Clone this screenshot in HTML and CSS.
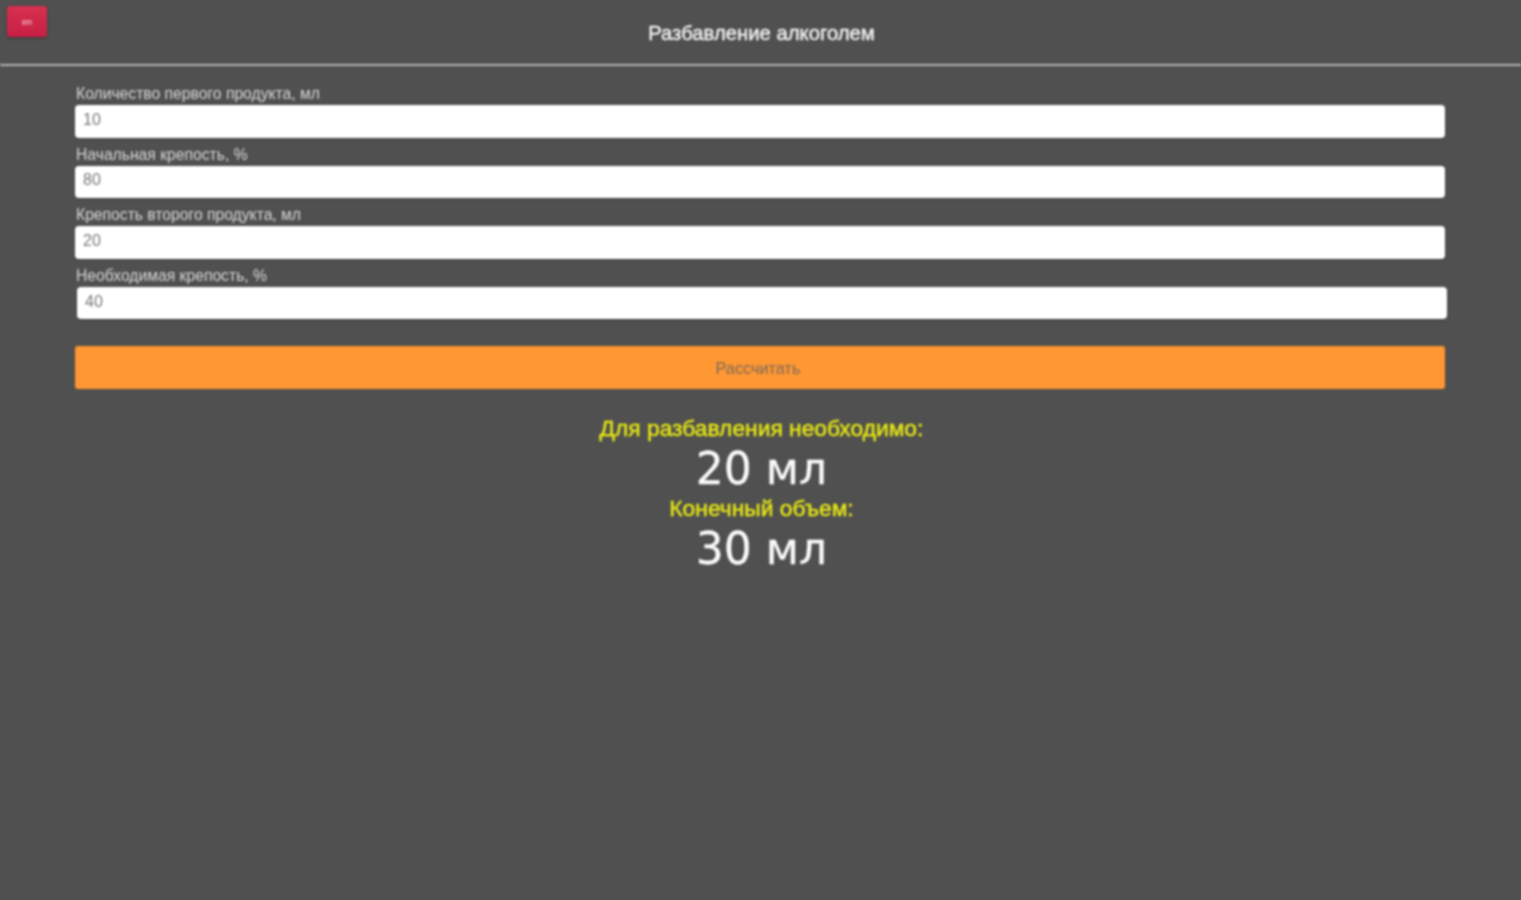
FILE: index.html
```html
<!DOCTYPE html>
<html lang="ru">
<head>
<meta charset="utf-8">
<title>Разбавление алкоголем</title>
<link rel="stylesheet" href="styles.css">
</head>
<body>
<div class="page">
  <header class="header">
    <button class="back" type="button">en</button>
    <h1 class="title">Разбавление алкоголем</h1>
  </header>
  <main class="content">
    <form class="form">
      <label class="field"><span class="label">Количество первого продукта, мл</span><input class="input" value="10"></label>
      <label class="field"><span class="label">Начальная крепость, %</span><input class="input" value="80"></label>
      <label class="field"><span class="label">Крепость второго продукта, мл</span><input class="input" value="20"></label>
      <label class="field field-shift"><span class="label">Необходимая крепость, %</span><input class="input" value="40"></label>
      <button class="submit" type="button">Рассчитать</button>
    </form>
    <section class="results">
      <p class="result-label">Для разбавления необходимо:</p>
      <p class="result-value">20 мл</p>
      <p class="result-label">Конечный объем:</p>
      <p class="result-value">30 мл</p>
    </section>
  </main>
</div>
</body>
</html>
```
FILE: styles.css
```css
* { box-sizing: border-box; }
html, body { height: 100%; }
body {
  margin: 0;
  background: #505050;
  font-family: "Liberation Sans", Arial, sans-serif;
  overflow: hidden;
}
.page { height: 900px; filter: blur(0.9px); }
.header {
  position: relative;
  height: 66px;
  padding: 2px 0 0 2px;
  border-bottom: 2px solid #b4b4b4;
  display: flex;
  align-items: center;
  justify-content: center;
}
.back {
  position: absolute;
  left: 7px;
  top: 6px;
  width: 40px;
  height: 31px;
  border: 0;
  border-radius: 3px;
  padding: 0;
  background: linear-gradient(#d8304f, #c81f45);
  box-shadow: 0 1px 3px rgba(0,0,0,.35);
  color: #f3d5dc;
  font: 9px "Liberation Sans", Arial, sans-serif;
}
.title {
  margin: 0;
  color: #f4f4f4;
  font-size: 20.3px;
  font-weight: 400;
  -webkit-text-stroke: 0.4px #f4f4f4;
}
.content { padding: 17px 76px 0 75px; }
.form { display: flex; flex-direction: column; }
.field { display: flex; flex-direction: column; height: 60.6px; }
.field-shift { margin: 0 -2px 0 2px; }
.field-shift .label { margin-left: -2px; }
.label {
  height: 22px;
  padding: 3px 0 0 1px;
  color: #d8d8d8;
  font-size: 15.7px;
  line-height: 16px;
}
.input {
  height: 32.5px;
  width: 100%;
  border: 0;
  border-radius: 4px;
  padding: 0 8px 3px;
  background: #fff;
  color: #777;
  font: 16px "Liberation Sans", Arial, sans-serif;
  box-shadow: 0 1px 2px rgba(0,0,0,.25);
}
.submit {
  height: 43px;
  margin-top: 21px;
  border: 0;
  border-radius: 3px;
  padding: 1px 4px 0 0;
  background: #ff9733;
  color: #7a6a5a;
  font: 16.3px "Liberation Sans", Arial, sans-serif;
}
.results { margin-top: 26px; padding-left: 3px; text-align: center; }
.result-label {
  margin: 0;
  height: 27px;
  color: #eaea14;
  font-size: 22.8px;
  line-height: 27px;
  -webkit-text-stroke: 0.4px #eaea14;
}
.result-value {
  margin: 0;
  height: 53px;
  color: #fafafa;
  font-family: "DejaVu Sans", sans-serif;
  font-size: 44px;
  line-height: 53px;
  -webkit-text-stroke: 0.3px #fafafa;
}
```
